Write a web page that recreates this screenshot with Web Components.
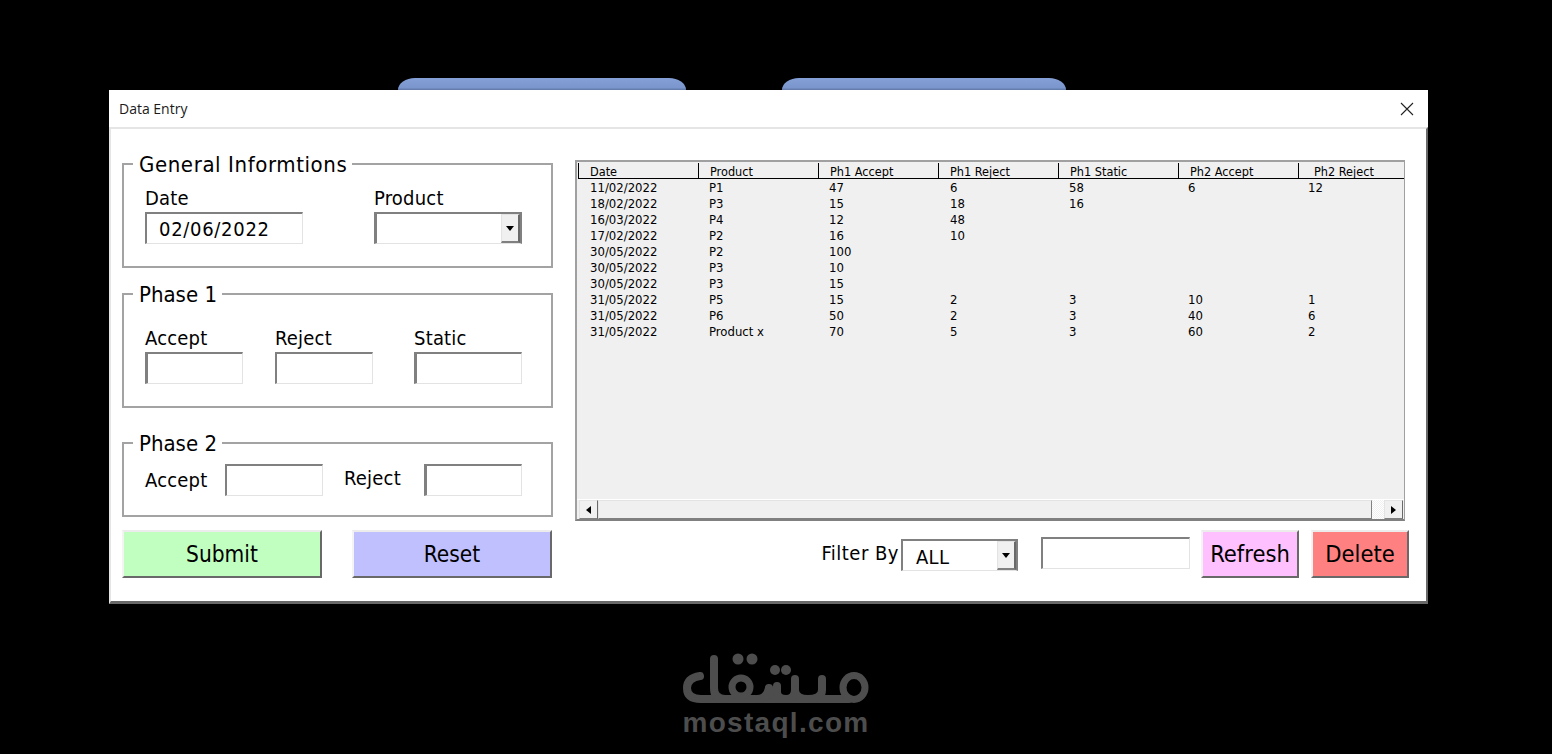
<!DOCTYPE html>
<html>
<head>
<meta charset="utf-8">
<title>Data Entry</title>
<style>
    html, body { margin: 0; padding: 0; background: #000; }
    body { width: 1552px; height: 754px; overflow: hidden; }
</style>
</head>
<body>
<back-tabs></back-tabs>
<data-window heading="Data Entry">
    <div slot="left">
        <group-box legend="General Informtions" spacing="0.6" style="height:118px;margin-top:-1px" pad="9">
            <div style="display:flex;padding-left:21px">
                <labeled-field label="Date" style="width:229px">
                    <sunken-box width="158" spacing="0.7">02/06/2022</sunken-box>
                </labeled-field>
                <labeled-field label="Product">
                    <combo-box width="148" style="border-left-width:3px"></combo-box>
                </labeled-field>
            </div>
        </group-box>
        <group-box legend="Phase 1" style="height:128px;margin-top:12px" pad="19">
            <div style="display:flex;padding-left:21px">
                <labeled-field label="Accept" style="width:130px"><sunken-box width="98" style="border-left-width:3px"></sunken-box></labeled-field>
                <labeled-field label="Reject" style="width:139px"><sunken-box width="98"></sunken-box></labeled-field>
                <labeled-field label="Static"><sunken-box width="108" style="border-left-width:3px"></sunken-box></labeled-field>
            </div>
        </group-box>
        <group-box legend="Phase 2" style="height:88px;margin-top:21px" pad="7">
            <div style="display:flex;align-items:center;padding-left:21px">
                <plain-label style="width:80px">Accept</plain-label>
                <sunken-box width="98"></sunken-box>
                <plain-label style="width:80px;margin-left:21px;margin-bottom:4px">Reject</plain-label>
                <sunken-box width="98" style="border-left-width:3px"></sunken-box>
            </div>
        </group-box>
        <div style="display:flex;gap:30px;margin-top:13px">
            <raised-button color="#c0ffc0" width="200" size="22.5">Submit</raised-button>
            <raised-button color="#c0c0ff" width="200" size="22.5">Reset</raised-button>
        </div>
    </div>
    <div slot="right">
        <data-list style="margin-top:9px"></data-list>
        <div style="display:flex;justify-content:flex-end;margin-top:9px;height:48px">
            <plain-label style="margin-top:12px;margin-right:2px;letter-spacing:0.5px">Filter By</plain-label>
            <combo-box width="117" value="ALL" style="margin-top:9px"></combo-box>
            <sunken-box width="149" style="margin-top:7px;margin-left:23px;height:32px"></sunken-box>
            <raised-button color="#ffc0ff" width="98" size="23.5" style="margin-left:11px">Refresh</raised-button>
            <raised-button color="#ff8080" width="98" size="23.5" style="margin-left:12px">Delete</raised-button>
        </div>
    </div>
</data-window>
<mostaql-mark></mostaql-mark>

<script>
const UI_FONT = `"DejaVu Sans Condensed", "DejaVu Sans", sans-serif`;

class BackTabs extends HTMLElement {
    constructor() {
        super();
        this.attachShadow({ mode: 'open' });
    }
    connectedCallback() {
        this.shadowRoot.innerHTML = `
        <style>
            :host { display: flex; height: 12px; padding: 78px 0 0 398px; }
            .tab {
                height: 12px;
                background: linear-gradient(#84a0d6, #7a96cc 80%, #5f76a4);
                border-radius: 17px 17px 0 0 / 12px 12px 0 0;
            }
            .one { width: 288px; }
            .two { width: 284px; margin-left: 96px; }
        </style>
        <div class="tab one"></div>
        <div class="tab two"></div>`;
    }
}

class DataWindow extends HTMLElement {
    constructor() {
        super();
        this.attachShadow({ mode: 'open' });
    }
    connectedCallback() {
        this.shadowRoot.innerHTML = `
        <style>
            :host {
                display: block;
                width: 1319px;
                height: 514px;
                margin-left: 109px;
                font-family: ${UI_FONT};
                color: #000;
            }
            .title {
                height: 37px;
                background: #fff;
                display: flex;
                align-items: center;
                justify-content: space-between;
                padding: 0 14px 0 10px;
                font: 14px "Open Sans", "Noto Sans", sans-serif;
                color: #1a1a1a;
            }
            .title svg { display: block; }
            .body {
                box-sizing: border-box;
                height: 477px;
                background: #fff;
                border-top: 2px solid #e5e5e5;
                border-left: 2px solid #e5e5e5;
                border-right: 2px solid #696969;
                border-bottom: 3px solid #696969;
                padding: 22px 0 0 11px;
                display: flex;
                gap: 22px;
            }
            .left { width: 431px; }
            .right { width: 834px; }
        </style>
        <div class="title">
            <span>${this.getAttribute('heading')}</span>
            <svg width="14" height="14" viewBox="0 0 14 14"><path d="M1 1 L13 13 M13 1 L1 13" stroke="#222" stroke-width="1.1" fill="none"/></svg>
        </div>
        <div class="body">
            <div class="left"><slot name="left"></slot></div>
            <div class="right"><slot name="right"></slot></div>
        </div>`;
    }
}

class GroupBox extends HTMLElement {
    constructor() {
        super();
        this.attachShadow({ mode: 'open' });
    }
    connectedCallback() {
        this.shadowRoot.innerHTML = `
        <style>
            :host { display: block; box-sizing: border-box; }
            fieldset {
                box-sizing: border-box;
                height: 100%;
                margin: 0;
                padding: ${this.getAttribute('pad') || 0}px 0 0 0;
                border: 2px solid #a3a3a3;
                min-width: 0;
            }
            legend {
                margin-left: 9px;
                padding: 2px 5px 0 6px;
                font-size: 22px;
                line-height: 26px;
                letter-spacing: ${this.getAttribute('spacing') || 0}px;
            }
        </style>
        <fieldset>
            <legend>${this.getAttribute('legend')}</legend>
            <slot></slot>
        </fieldset>`;
    }
}

class LabeledField extends HTMLElement {
    constructor() {
        super();
        this.attachShadow({ mode: 'open' });
    }
    connectedCallback() {
        this.shadowRoot.innerHTML = `
        <style>
            :host { display: block; }
            .label { font-size: 20px; line-height: 22px; margin-bottom: 3px; letter-spacing: 0.2px; }
        </style>
        <div class="label">${this.getAttribute('label')}</div>
        <slot></slot>`;
    }
}

class PlainLabel extends HTMLElement {
    constructor() {
        super();
        this.attachShadow({ mode: 'open' });
    }
    connectedCallback() {
        this.shadowRoot.innerHTML = `
        <style>
            :host { display: block; font-size: 20px; line-height: 22px; letter-spacing: 0.2px; }
        </style>
        <slot></slot>`;
    }
}

class SunkenBox extends HTMLElement {
    constructor() {
        super();
        this.attachShadow({ mode: 'open' });
    }
    connectedCallback() {
        this.shadowRoot.innerHTML = `
        <style>
            :host {
                display: block;
                box-sizing: border-box;
                width: ${this.getAttribute('width')}px;
                height: 32px;
                background: #fff;
                border-top: 2px solid #808080;
                border-left: 2px solid #808080;
                border-right: 1px solid #e3e3e3;
                border-bottom: 1px solid #e3e3e3;
                padding-left: 12px;
                font-size: 20px;
                line-height: 31px;
                letter-spacing: ${this.getAttribute('spacing') || 0}px;
                white-space: nowrap;
            }
        </style>
        <slot></slot>`;
    }
}

class ComboBox extends HTMLElement {
    constructor() {
        super();
        this.attachShadow({ mode: 'open' });
    }
    connectedCallback() {
        this.shadowRoot.innerHTML = `
        <style>
            :host {
                display: flex;
                box-sizing: border-box;
                width: ${this.getAttribute('width')}px;
                height: 32px;
                background: #fff;
                border-top: 2px solid #808080;
                border-left: 2px solid #808080;
                border-right: 2px solid #808080;
                border-bottom: 1px solid #e3e3e3;
            }
            .value { flex: 1; padding: 2px 0 0 13px; font-size: 20px; line-height: 28px; letter-spacing: 0.3px; }
            .btn {
                box-sizing: border-box;
                width: 19px;
                height: 29px;
                background: #f0f0f0;
                border-left: 1px solid #e3e3e3;
                border-top: 1px solid #e3e3e3;
                border-right: 2px solid #696969;
                border-bottom: 2px solid #808080;
                display: flex;
                align-items: center;
                justify-content: center;
            }
            .btn i {
                width: 0;
                height: 0;
                border-left: 4.5px solid transparent;
                border-right: 4.5px solid transparent;
                border-top: 5px solid #000;
            }
        </style>
        <div class="value">${this.getAttribute('value') || ''}</div>
        <div class="btn"><i></i></div>`;
    }
}

class RaisedButton extends HTMLElement {
    constructor() {
        super();
        this.attachShadow({ mode: 'open' });
    }
    connectedCallback() {
        this.shadowRoot.innerHTML = `
        <style>
            :host {
                display: block;
                box-sizing: border-box;
                width: ${this.getAttribute('width')}px;
                height: 48px;
                background: ${this.getAttribute('color')};
                border-top: 2px solid #ececec;
                border-left: 2px solid #f4f4f4;
                border-right: 2px solid #696969;
                border-bottom: 2px solid #696969;
                font-size: ${this.getAttribute('size') || 22}px;
                line-height: 44px;
                text-align: center;
            }
        </style>
        <slot></slot>`;
    }
}

const COLUMNS = [
    { name: 'Date', head: 11, cell: 12 },
    { name: 'Product', head: 11, cell: 11 },
    { name: 'Ph1 Accept', head: 11, cell: 11 },
    { name: 'Ph1 Reject', head: 11, cell: 12 },
    { name: 'Ph1 Static', head: 11, cell: 11 },
    { name: 'Ph2 Accept', head: 11, cell: 10 },
    { name: 'Ph2 Reject', head: 15, cell: 10 },
];

const ROWS = [
    ['11/02/2022', 'P1', '47', '6', '58', '6', '12'],
    ['18/02/2022', 'P3', '15', '18', '16', '', ''],
    ['16/03/2022', 'P4', '12', '48', '', '', ''],
    ['17/02/2022', 'P2', '16', '10', '', '', ''],
    ['30/05/2022', 'P2', '100', '', '', '', ''],
    ['30/05/2022', 'P3', '10', '', '', '', ''],
    ['30/05/2022', 'P3', '15', '', '', '', ''],
    ['31/05/2022', 'P5', '15', '2', '3', '10', '1'],
    ['31/05/2022', 'P6', '50', '2', '3', '40', '6'],
    ['31/05/2022', 'Product x', '70', '5', '3', '60', '2'],
];

class DataList extends HTMLElement {
    constructor() {
        super();
        this.attachShadow({ mode: 'open' });
    }
    connectedCallback() {
        const head = COLUMNS.map(c =>
            `<div class="hc" style="padding-left:${c.head}px">${c.name}</div>`).join('');
        const rows = ROWS.map(r =>
            `<div class="row">${r.map((v, i) =>
                `<div style="padding-left:${COLUMNS[i].cell}px">${v}</div>`).join('')}</div>`).join('');
        this.shadowRoot.innerHTML = `
        <style>
            :host {
                display: flex;
                flex-direction: column;
                box-sizing: border-box;
                width: 830px;
                height: 361px;
                background: #f0f0f0;
                border-top: 2px solid #a0a0a0;
                border-left: 2px solid #a0a0a0;
                border-right: 1px solid #a0a0a0;
                border-bottom: 2px solid #808080;
                font-size: 13px;
                color: #000;
            }
            .head, .row {
                display: grid;
                grid-template-columns: repeat(6, 120px) 107px;
                margin-left: 1px;
                overflow: hidden;
            }
            .head { height: 16px; border-bottom: 1px solid #000; font-size: 12.6px; }
            .hc { border-left: 1px solid #000; margin-top: 1px; line-height: 18px; white-space: nowrap; height: 15px; overflow: hidden; }
            .row { height: 16px; line-height: 16px; white-space: nowrap; }
            .rows { flex: 1; padding-top: 1px; }
            .bar {
                height: 20px;
                display: flex;
                border-top: 1px solid #fff;
                padding-left: 2px;
                box-sizing: border-box;
            }
            .arrow {
                box-sizing: border-box;
                width: 19px;
                height: 19px;
                background: #f0f0f0;
                border: 1px solid #e3e3e3;
                border-right-color: #696969;
                border-bottom-color: #808080;
                display: flex;
                align-items: center;
                justify-content: center;
            }
            .arrow i { width: 0; height: 0; border-top: 4px solid transparent; border-bottom: 4px solid transparent; }
            .arrow .l { border-right: 5px solid #000; }
            .arrow .r { border-left: 5px solid #000; }
            .thumb {
                box-sizing: border-box;
                width: 774px;
                height: 19px;
                background: #f0f0f0;
                border: 1px solid #e3e3e3;
                border-right-color: #808080;
                border-bottom-color: #808080;
            }
            .track {
                width: 12px;
                height: 19px;
                background: repeating-conic-gradient(#fff 0 25%, #f0f0f0 0 50%) 0 0 / 2px 2px;
            }
        </style>
        <div class="head">${head}</div>
        <div class="rows">${rows}</div>
        <div class="bar">
            <div class="arrow"><i class="l"></i></div>
            <div class="thumb"></div>
            <div class="track"></div>
            <div class="arrow"><i class="r"></i></div>
        </div>`;
    }
}

class MostaqlMark extends HTMLElement {
    constructor() {
        super();
        this.attachShadow({ mode: 'open' });
    }
    connectedCallback() {
        this.shadowRoot.innerHTML = `
        <style>
            :host {
                display: flex;
                flex-direction: column;
                align-items: center;
                margin-top: 48px;
                color: #4d4d4d;
            }
            svg { display: block; }
            .url {
                font: bold 28px/30px "Liberation Sans", sans-serif;
                letter-spacing: 1.3px;
                margin-top: 2px;
            }
        </style>
        <svg width="190" height="54" viewBox="0 0 190 54">
            <g fill="none" stroke="#4d4d4d" stroke-width="8" stroke-linecap="round" stroke-linejoin="round">
                <path d="M19 24 Q6 26 6 36 Q6 47 20 47 H168"/>
                <path d="M33 7 V36 Q33 47 44 47"/>
                <path d="M76 47 Q86 47 88 36 M88 36 Q90 47 100 47"/>
                <path d="M96 34 V40 Q96 47 105 47 Q114 47 114 38 V27"/>
                <path d="M114 38 Q114 47 127 47 Q141 47 141 38 V27"/>
            </g>
            <g fill="none" stroke="#4d4d4d" stroke-width="7">
                <circle cx="60" cy="35" r="9"/>
                <ellipse cx="173" cy="35.5" rx="11" ry="12"/>
            </g>
            <g fill="#4d4d4d">
                <circle cx="57" cy="7" r="5.5"/><circle cx="71" cy="7" r="5.5"/>
                <circle cx="94" cy="18" r="5"/><circle cx="105" cy="18" r="5"/>
            </g>
        </svg>
        <div class="url">mostaql.com</div>`;
    }
}

customElements.define('back-tabs', BackTabs);
customElements.define('data-window', DataWindow);
customElements.define('group-box', GroupBox);
customElements.define('labeled-field', LabeledField);
customElements.define('plain-label', PlainLabel);
customElements.define('sunken-box', SunkenBox);
customElements.define('combo-box', ComboBox);
customElements.define('raised-button', RaisedButton);
customElements.define('data-list', DataList);
customElements.define('mostaql-mark', MostaqlMark);
</script>
</body>
</html>
